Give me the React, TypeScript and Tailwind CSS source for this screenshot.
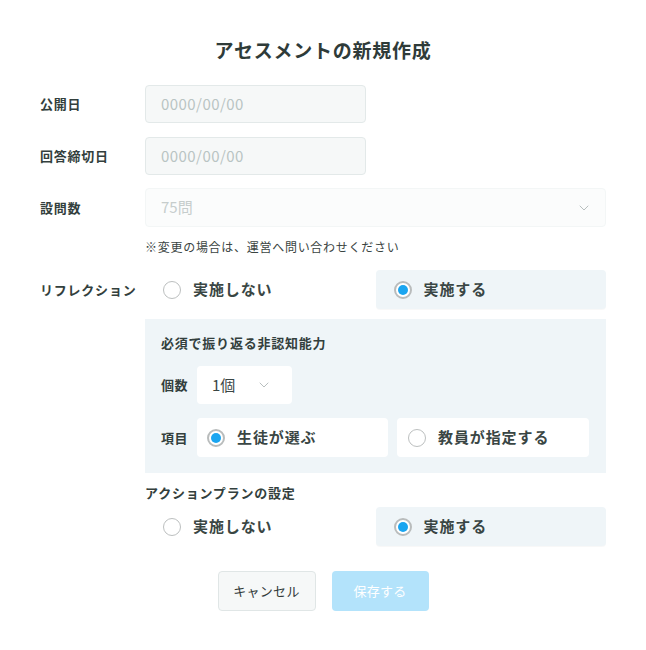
import { ChevronDown } from "lucide-react";

const font = { fontFamily: '"Noto Sans CJK JP", "Noto Sans", sans-serif' };

function Radio({ checked }: { checked?: boolean }) {
  return checked ? (
    <span className="flex h-[18px] w-[18px] shrink-0 items-center justify-center rounded-full border-2 border-[#b9bcbc] bg-white">
      <span className="h-[10px] w-[10px] rounded-full bg-[#1aa5f0]" />
    </span>
  ) : (
    <span className="h-[18px] w-[18px] shrink-0 rounded-full border-[1.5px] border-[#bcbfbf] bg-white" />
  );
}

function Option({ label, checked, className = "pl-[18px]" }: { label: string; checked?: boolean; className?: string }) {
  return (
    <div className={`flex h-[39px] items-center gap-[12px] rounded-[4px] ${className}`}>
      <Radio checked={checked} />
      <span className="text-[15px] font-bold tracking-[0.06em] text-[#3a4644]">{label}</span>
    </div>
  );
}

function DateInput() {
  return (
    <div className="flex h-[38px] w-[221px] items-center rounded-[4px] border border-[#e3e9e9] bg-[#f6f8f8] pl-[15px] text-[15px] tracking-[0.03em] text-[#b9c4c3]">
      0000/00/00
    </div>
  );
}

function Label({ children }: { children: string }) {
  return <div className="w-[105px] shrink-0 text-[13px] font-bold tracking-[0.06em] text-[#333f3d]">{children}</div>;
}

export default function App() {
  return (
    <div style={font} className="min-h-[650px] w-[646px] bg-white px-[40px] pt-[36px]">
      <h1 className="text-center text-[19px] font-bold leading-[28px] tracking-[0.04em] text-[#2f3b39]">
        アセスメントの新規作成
      </h1>

      <div className="mt-[21px] flex items-center">
        <Label>公開日</Label>
        <DateInput />
      </div>
      <div className="mt-[14px] flex items-center">
        <Label>回答締切日</Label>
        <DateInput />
      </div>
      <div className="mt-[13px] flex items-center">
        <Label>設問数</Label>
        <div className="flex h-[39px] flex-1 items-center justify-between rounded-[4px] border border-[#f3f6f6] bg-[#fbfcfc] pl-[15px] pr-[13px] text-[15px] text-[#c6cdcc]">
          <span>75問</span>
          <ChevronDown size={16} strokeWidth={1.5} className="text-[#b8bfbf]" />
        </div>
      </div>
      <div className="ml-[105px] mt-[10px] text-[12px] leading-[19px] tracking-[0.06em] text-[#3a4442]">
        ※変更の場合は、運営へ問い合わせください
      </div>

      <div className="mt-[14px] flex items-center">
        <Label>リフレクション</Label>
        <div className="grid flex-1 grid-cols-2">
          <Option label="実施しない" />
          <Option label="実施する" checked className="bg-[#eff5f8] pl-[18px] shadow-[0_1px_1px_rgba(0,0,0,0.03)]" />
        </div>
      </div>

      <div className="ml-[105px] mt-[10px] bg-[#eff5f8] px-[16px] pb-[16px] pt-[14px]">
        <div className="text-[13px] font-bold leading-[20px] tracking-[0.06em] text-[#333f3d]">必須で振り返る非認知能力</div>
        <div className="mt-[13px] flex items-center">
          <div className="w-[36px] text-[13px] font-bold tracking-[0.04em] text-[#333f3d]">個数</div>
          <div className="flex h-[38px] w-[95px] items-center justify-between rounded-[4px] bg-white pl-[15px] pr-[20px] text-[15px] text-[#3a4644]">
            <span>1個</span>
            <ChevronDown size={16} strokeWidth={1.5} className="text-[#b8bfbf]" />
          </div>
        </div>
        <div className="mt-[14px] flex items-center">
          <div className="w-[36px] text-[13px] font-bold tracking-[0.04em] text-[#333f3d]">項目</div>
          <div className="flex flex-1 gap-[9px] pr-[1px]">
            <Option label="生徒が選ぶ" checked className="w-[191px] bg-white pl-[10px]" />
            <Option label="教員が指定する" className="flex-1 bg-white pl-[11px]" />
          </div>
        </div>
      </div>

      <div className="ml-[105px] mt-[10px] text-[13px] font-bold leading-[20px] tracking-[0.06em] text-[#333f3d]">
        アクションプランの設定
      </div>
      <div className="ml-[105px] mt-[4px] grid grid-cols-2">
        <Option label="実施しない" />
        <Option label="実施する" checked className="bg-[#eff5f8] pl-[18px] shadow-[0_1px_1px_rgba(0,0,0,0.03)]" />
      </div>

      <div className="mt-[25px] flex justify-center gap-[16px]">
        <button className="h-[40px] w-[98px] rounded-[4px] border border-[#e0e6e6] bg-[#f6f8f8] text-[13px] tracking-[0.02em] text-[#333b3a]">
          キャンセル
        </button>
        <button className="h-[40px] w-[97px] rounded-[4px] bg-[#b3e3fb] text-[13px] tracking-[0.02em] text-white">
          保存する
        </button>
      </div>
    </div>
  );
}
